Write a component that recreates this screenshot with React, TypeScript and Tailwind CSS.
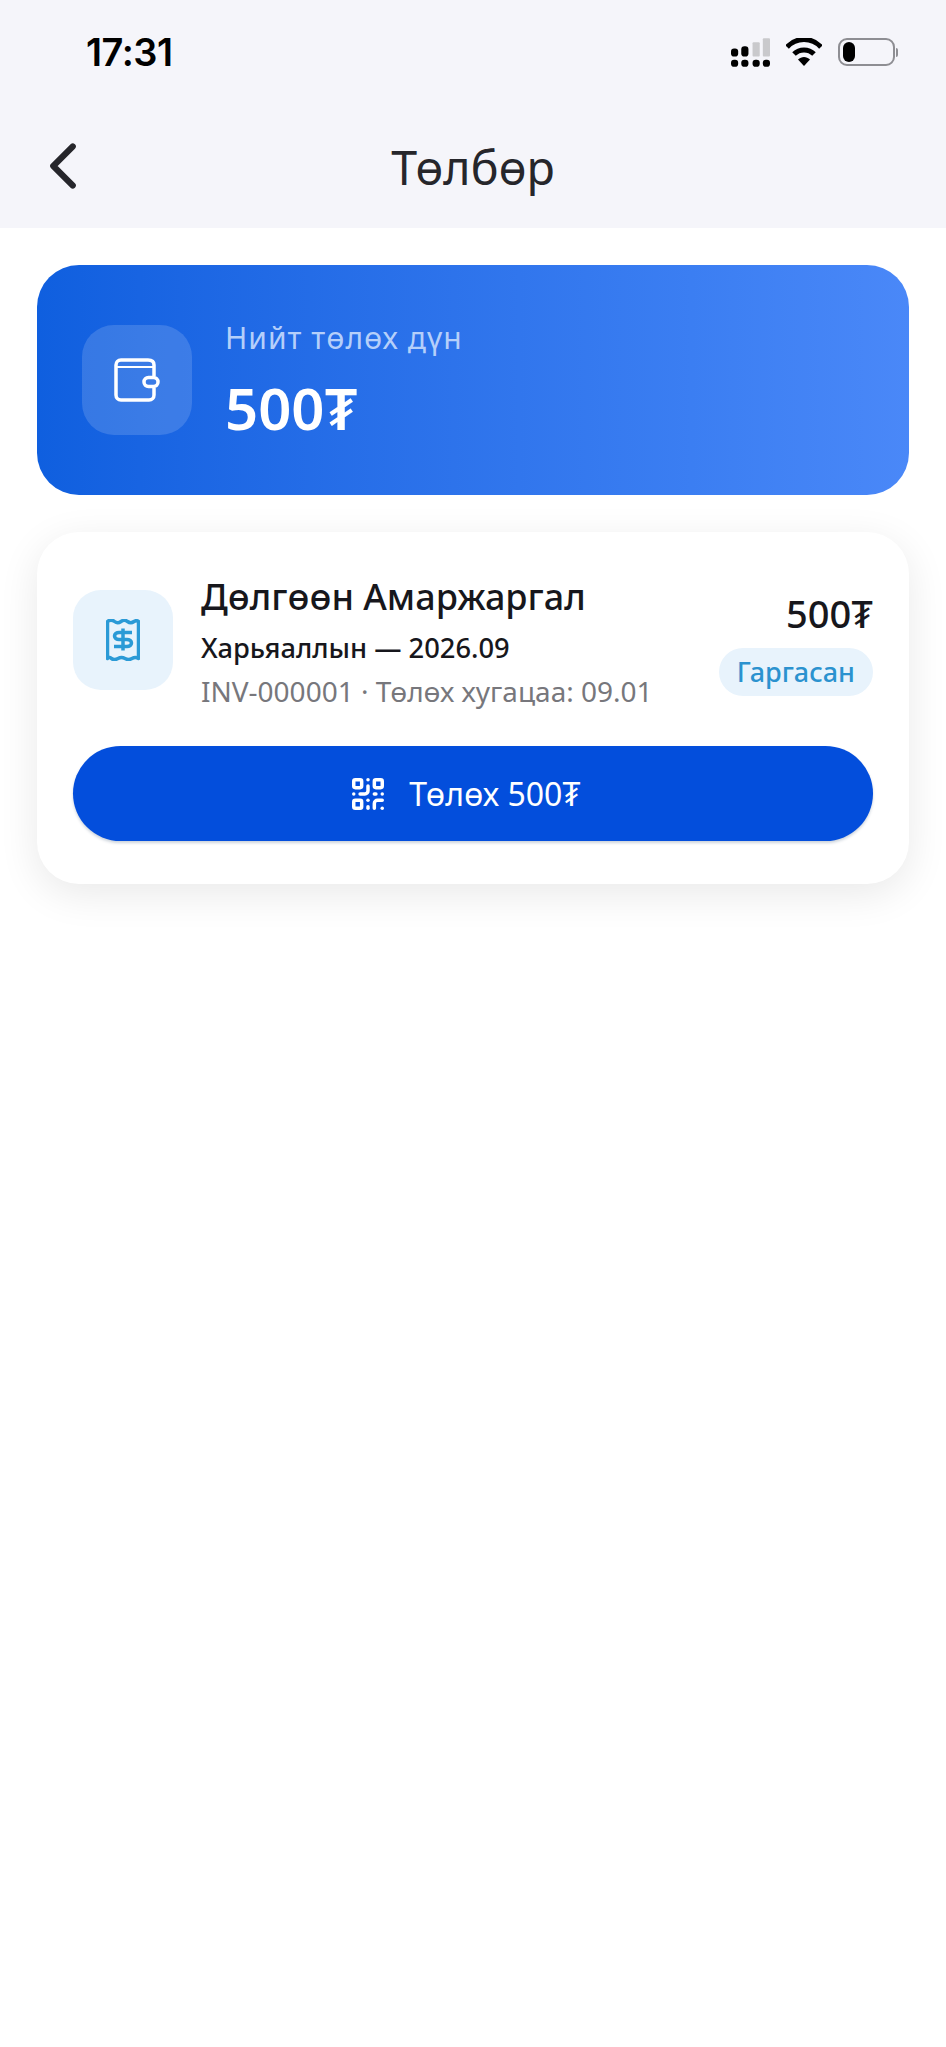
import { ChevronLeft, QrCode } from "lucide-react";

const font = "font-['Noto_Sans',sans-serif]";

function StatusIcons() {
  return (
    <div className="flex items-center gap-[16px]">
      <svg width="39" height="29" viewBox="0 0 38 28">
        <g fill="#000">
          <rect x="0" y="10" width="7" height="8" rx="3" />
          <rect x="10" y="8" width="7" height="10" rx="3" />
          <rect x="0" y="21" width="7" height="7" rx="3" />
          <rect x="10" y="21" width="7" height="7" rx="3" />
          <rect x="21" y="21" width="7" height="7" rx="3" />
          <rect x="31" y="21" width="7" height="7" rx="3" />
        </g>
        <rect x="21" y="4" width="7" height="14" rx="1" fill="#c9c9cc" />
        <rect x="31" y="0" width="7" height="18" rx="1" fill="#c9c9cc" />
      </svg>
      <svg width="36" height="28" viewBox="0 0 36 28">
        <path d="M1 9C10-1 26-1 35 9" fill="none" stroke="#000" strokeWidth="5" />
        <path d="M8 16C13.500 10.500 22.500 10.500 28 16" fill="none" stroke="#000" strokeWidth="5" />
        <path d="M12 21.500C15.500 18 20.500 18 24 21.500L18 28Z" fill="#000" />
      </svg>
      <div className="flex items-center gap-[1px]">
        <div className="flex h-[28px] w-[57px] items-center rounded-[9px] border-[2.5px] border-[#8e8e93] px-[3px]">
          <div className="h-[20px] w-[12px] rounded-[6px] bg-black" />
        </div>
        <div className="h-[9px] w-[2px] rounded-r-full bg-[#8e8e93]" />
      </div>
    </div>
  );
}

function WalletIcon() {
  return (
    <svg width="46" height="44" viewBox="0 0 46 44" fill="none" stroke="#fff" strokeWidth="3.500" strokeLinejoin="round">
      <path d="M2 7C2 4 4 2 7 2H34C38 2 40 4 40 7V18M2 7V37C2 40 4 42 7 42H35C38 42 40 40 40 37V30" />
      <path d="M2 9H40" strokeWidth="2" />
      <rect x="30" y="19.500" width="14" height="9" rx="4.500" />
    </svg>
  );
}

function ReceiptIcon() {
  return (
    <svg width="34" height="42" viewBox="0 0 34 42" fill="none" stroke="#2b9ad6" strokeWidth="3.500">
      <path d="M1.500 2.500C4 .5 6 .5 8.500 2.500S13 4 15 2.500 19.500 1 21.500 2.500 26 4 28 2.500 31 1.500 32.500 2.500V39.500C30 38 28.500 38 26 39.500S21.500 41 19 39.500 14.500 38 12 39.500 7.500 41 5.500 39.500 3 38 1.500 39.500Z" strokeLinejoin="round" />
      <path d="M26 13.500H13C10.500 13.500 8.500 15 8.500 17S10.500 20.500 13 20.500H21C23.500 20.500 25.500 22 25.500 24S23.500 27.500 21 27.500H8" />
      <path d="M17 9.500V31.500" />
    </svg>
  );
}

export default function App() {
  return (
    <div className={`${font} min-h-[2047px] w-[946px] bg-white`}>
      <header className="h-[228px] bg-[#f5f5fa]">
        <div className="flex h-[104px] items-center justify-between pl-[86px] pr-[48px]">
          <span className="font-['Inter',sans-serif] text-[38px] font-semibold tracking-[-0.5px] text-black">17:31</span>
          <StatusIcons />
        </div>
        <div className="relative flex h-[124px] items-center justify-center pt-[2px]">
          <ChevronLeft className="absolute left-[24px] top-[23px] h-[78px] w-[78px] text-[#26262b]" strokeWidth={1.9} />
          <h1 className="text-[46.500px] leading-none text-[#26262b]">Төлбөр</h1>
        </div>
      </header>

      <main className="flex flex-col gap-[37px] px-[37px] pt-[37px]">
        <section className="flex h-[230px] items-center gap-[33px] rounded-[42px] bg-gradient-to-r from-[#0f5fdf] via-[#3b7ef2] via-75% to-[#4a88f8] px-[45px]">
          <div className="flex h-[110px] w-[110px] items-center justify-center rounded-[32px] bg-white/15">
            <WalletIcon />
          </div>
          <div className="flex flex-col gap-[20px] pb-[5px]">
            <span className="text-[30px] leading-[40px] tracking-[1px] text-[#b5cffa]">Нийт төлөх дүн</span>
            <span className="text-[58px] font-semibold leading-[60px] text-white">500₮</span>
          </div>
        </section>

        <section className="rounded-[42px] bg-white px-[36px] pb-[43px] pt-[38px] shadow-[0_10px_40px_rgba(0,0,0,0.09)]">
          <div className="flex items-center">
            <div className="flex h-[100px] w-[100px] shrink-0 items-center justify-center rounded-[28px] bg-[#e8f3fc]">
              <ReceiptIcon />
            </div>
            <div className="ml-[28px] flex min-w-0 flex-1 flex-col pt-[4px]">
              <span className="whitespace-nowrap text-[36px] font-medium leading-[46px] text-[#17171c]">Дөлгөөн Амаржаргал</span>
              <span className="mt-[10px] whitespace-nowrap text-[27.300px] font-medium leading-[36px] text-[#17171c]">Харьяаллын — 2026.09</span>
              <span className="mt-[7px] whitespace-nowrap text-[28px] leading-[36px] text-[#77777c]">INV-000001 · Төлөх хугацаа: 09.01</span>
            </div>
            <div className="flex flex-col items-end gap-[13px] pt-[7px]">
              <span className="text-[38px] font-medium leading-[44px] text-[#17171c]">500₮</span>
              <span className="rounded-full bg-[#e8f3fc] px-[18px] text-[27px] font-medium leading-[48px] text-[#2b92cf]">Гаргасан</span>
            </div>
          </div>
          <button className="mt-[37px] flex h-[95px] w-full items-center justify-center gap-[22px] rounded-full bg-[#034edc] pr-[16px] text-[32px] text-white shadow-[0_2px_3px_rgba(0,40,80,0.2)]">
            <QrCode className="h-[38px] w-[38px]" strokeWidth={2.2} />
            Төлөх 500₮
          </button>
        </section>
      </main>
    </div>
  );
}
